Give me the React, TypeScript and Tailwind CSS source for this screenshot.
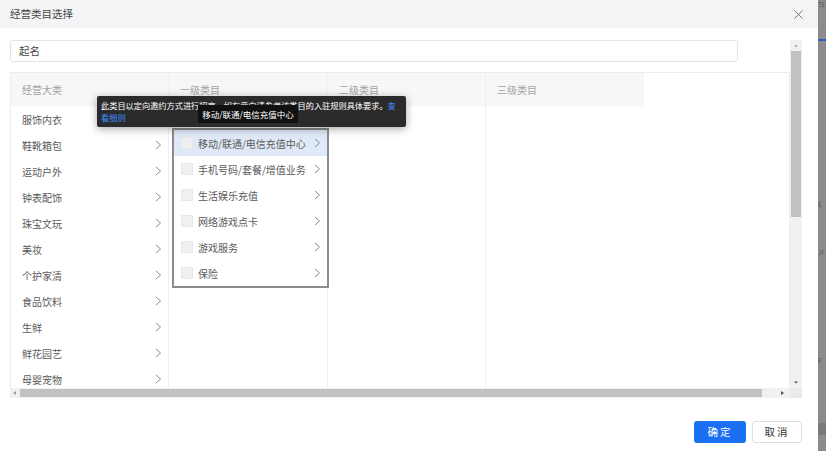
import React from "react";

const FONT = { fontFamily: '"Noto Sans CJK SC", "Noto Sans", sans-serif' };

const majors = ["服饰内衣", "鞋靴箱包", "运动户外", "钟表配饰", "珠宝文玩", "美妆", "个护家清", "食品饮料", "生鲜", "鲜花园艺", "母婴宠物"];
const level1 = ["移动/联通/电信充值中心", "手机号码/套餐/增值业务", "生活娱乐充值", "网络游戏点卡", "游戏服务", "保险"];

function Chevron({ className = "" }: { className?: string }) {
  return (
    <svg width="7" height="10" viewBox="0 0 7 10" className={className}>
      <path d="M1 1 L5.5 5 L1 9" fill="none" stroke="#8a8a8a" strokeWidth="1" />
    </svg>
  );
}

export default function App() {
  return (
    <div className="w-[826px] h-[451px] flex overflow-hidden" style={FONT}>
      <div className="w-[818px] h-full flex flex-col bg-white">
        {/* header */}
        <div className="h-[28px] bg-[#f3f4f6] flex items-center justify-between pl-[10px] pr-[15px] shrink-0">
          <span className="text-[10.5px] text-[#444]">经营类目选择</span>
          <svg width="9" height="9" viewBox="0 0 9 9">
            <path d="M0.5 0.5 L8.5 8.5 M8.5 0.5 L0.5 8.5" stroke="#777" strokeWidth="1" />
          </svg>
        </div>
        {/* body */}
        <div className="flex pl-[10px] pt-[12px]">
          <div className="w-[780px] flex flex-col">
            <div className="w-[728px] h-[22px] border border-[#e3e3e3] rounded-[3px] flex items-center pl-[8px] text-[10.5px] text-[#444]">
              起名
            </div>
            <div className="mt-[10px] h-[316px] border-t border-l border-r border-[#ececec] flex relative">
              {/* col1 */}
              <div className="w-[158px] border-r border-[#f0f0f0] flex flex-col overflow-hidden">
                <div className="h-[33px] shrink-0 bg-[#f7f7f7] flex items-center pl-[11px] text-[10px] text-[#a3a3a3]">经营大类</div>
                {majors.map((m) => (
                  <div key={m} className="h-[26px] shrink-0 flex items-center justify-between pl-[11px] pr-[6px] text-[10px] text-[#5a5a5a]">
                    <span>{m}</span>
                    <Chevron />
                  </div>
                ))}
              </div>
              {/* col2 */}
              <div className="w-[159px] border-r border-[#f0f0f0] flex flex-col">
                <div className="h-[33px] shrink-0 bg-[#f7f7f7] flex items-center pl-[11px] text-[10px] text-[#a3a3a3]">一级类目</div>
                <div className="h-[22px] shrink-0 flex items-center pl-[10px] text-[8px] text-[#aaa] whitespace-nowrap overflow-hidden">以下类目需提供额外资质或申请信用</div>
                <div className="relative ml-[3px] w-[157px] border-2 border-[#8c8c8c] bg-white">
                  {level1.map((l, i) => (
                    <div key={l} className={`h-[26px] flex items-center pl-[7px] pr-[6px] ${i === 0 ? "bg-[#dfe9f7]" : ""}`}>
                      <span className="w-[12px] h-[12px] bg-[#f0f0f0] border border-[#e8e8e8] shrink-0" />
                      <span className="ml-[5px] text-[10px] text-[#5a5a5a] flex-1 whitespace-nowrap">{l}</span>
                      <Chevron />
                    </div>
                  ))}
                </div>
              </div>
              {/* col3 */}
              <div className="w-[158px] border-r border-[#f0f0f0] flex flex-col">
                <div className="h-[33px] shrink-0 bg-[#f7f7f7] flex items-center pl-[11px] text-[10px] text-[#a3a3a3]">二级类目</div>
              </div>
              {/* col4 */}
              <div className="w-[158px] flex flex-col">
                <div className="h-[33px] shrink-0 bg-[#f7f7f7] flex items-center pl-[11px] text-[10px] text-[#a3a3a3]">三级类目</div>
              </div>
              <div className="flex-1" />

              {/* tooltip 1 */}
              <div className="absolute left-[86px] top-[23px] w-[309px] h-[31px] bg-[#2b2b2b] shadow-[0_2px_8px_rgba(0,0,0,0.35)] rounded-[2px] px-[4px] pt-[3px] text-[8.2px] leading-[12px] text-white whitespace-nowrap">
                <div>
                  此类目以定向邀约方式进行招商，如有意向请参考该类目的入驻规则具体要求。<span className="text-[#3d8bff]">查</span>
                </div>
                <div className="text-[#3d8bff]">看细则</div>
              </div>
              {/* tooltip 2 */}
              <div className="absolute left-[187px] top-[32px] w-[100px] h-[18px] bg-[#111] flex items-center justify-center text-[8.5px] text-white whitespace-nowrap">
                移动/联通/电信充值中心
              </div>
            </div>
            {/* horizontal scrollbar */}
            <div className="h-[10px] bg-[#f1f1f1] flex items-center">
              <svg width="10" height="10" viewBox="0 0 10 10"><path d="M6 3 L3 5 L6 7 Z" fill="#a0a0a0" /></svg>
              <div className="w-[742px] h-[8px] bg-[#c1c1c1]" />
              <div className="flex-1 flex justify-end pr-[3px]">
                <svg width="10" height="10" viewBox="0 0 10 10"><path d="M4 3 L7 5 L4 7 Z" fill="#505050" /></svg>
              </div>
            </div>
          </div>
          {/* vertical scrollbar */}
          <div className="w-[12px] flex flex-col">
            <div className="h-[348px] bg-[#f1f1f1] flex flex-col items-center">
              <svg width="12" height="11" viewBox="0 0 12 11"><path d="M4 6.5 L6 4.5 L8 6.5 Z" fill="#a0a0a0" /></svg>
              <div className="w-[10px] h-[166px] bg-[#c1c1c1]" />
              <div className="flex-1" />
              <svg width="12" height="11" viewBox="0 0 12 11"><path d="M4 4.5 L6 6.5 L8 4.5 Z" fill="#505050" /></svg>
            </div>
            <div className="h-[10px] bg-[#eaeaea]" />
          </div>
        </div>
        {/* footer */}
        <div className="flex justify-end gap-[6px] pr-[16px] pt-[23px]">
          <button className="w-[52px] h-[22px] rounded-[3px] bg-[#1a6ff3] text-white text-[10.5px] tracking-[2px]">确定</button>
          <button className="w-[50px] h-[22px] rounded-[3px] border border-[#dedede] bg-white text-[#333] text-[10.5px] tracking-[2px]">取消</button>
        </div>
      </div>
      {/* right page strip */}
      <div className="w-[8px] h-full bg-[#8b8b8b] flex flex-col text-[6px] leading-[8px] text-[#555] overflow-hidden">
        <div className="pt-[1px]">75</div>
        <div className="mt-[30px] h-[2px] bg-[#2a5cc8]" />
        <div className="mt-[160px]">E</div>
        <div className="mt-[40px]">JF</div>
        <div className="mt-[100px]">E</div>
        <div className="mt-[58px] h-[12px] bg-[#7a7a7a]" />
      </div>
    </div>
  );
}
